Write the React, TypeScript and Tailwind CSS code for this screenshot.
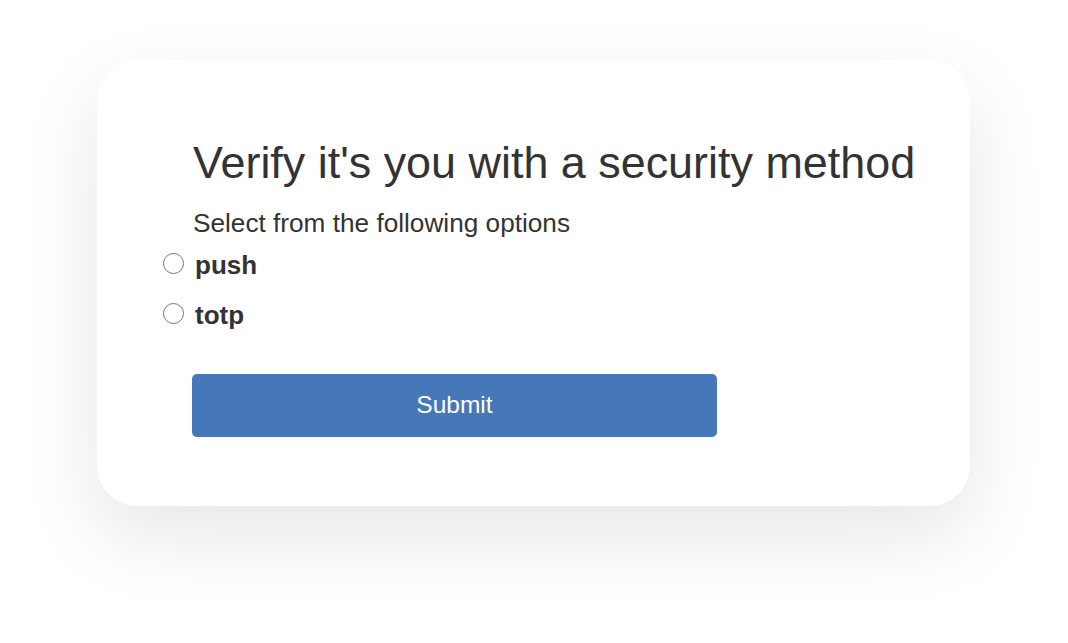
import React, { useState } from 'react';

const options = ['push', 'totp'];

export default function App() {
  const [selected, setSelected] = useState<string | null>(null);

  return (
    <div
      className="min-h-screen w-full bg-white pt-[60px] pl-[97px]"
      style={{ fontFamily: '"Liberation Sans", Arial, sans-serif' }}
    >
      <div className="w-[873px] h-[446px] rounded-[40px] bg-white shadow-[0_30px_80px_rgba(0,0,0,0.1)] pt-[81px]">
        <h1 className="pl-[96px] text-[44.9px] leading-none font-normal text-[#333333]">
          Verify it's you with a security method
        </h1>
        <p className="pl-[96px] mt-[24px] text-[26.2px] leading-none text-[#333333]">
          Select from the following options
        </p>

        <div className="mt-[16px] pl-[66px] flex flex-col gap-[24px]">
          {options.map((opt) => (
            <label key={opt} className="flex items-center gap-[11px] cursor-pointer">
              <input
                type="radio"
                name="method"
                checked={selected === opt}
                onChange={() => setSelected(opt)}
                className="appearance-none w-[21px] h-[21px] rounded-full border-[1.5px] border-[#767676] bg-white checked:border-[6px] checked:border-[#4677b8] -mt-[4px]"
              />
              <span className="text-[26px] leading-none font-bold text-[#333333]">{opt}</span>
            </label>
          ))}
        </div>

        <button className="ml-[95px] mt-[46px] w-[525px] h-[63px] rounded-[5px] bg-[#4677b8] text-white text-[24.5px] leading-none">
          Submit
        </button>
      </div>
    </div>
  );
}
